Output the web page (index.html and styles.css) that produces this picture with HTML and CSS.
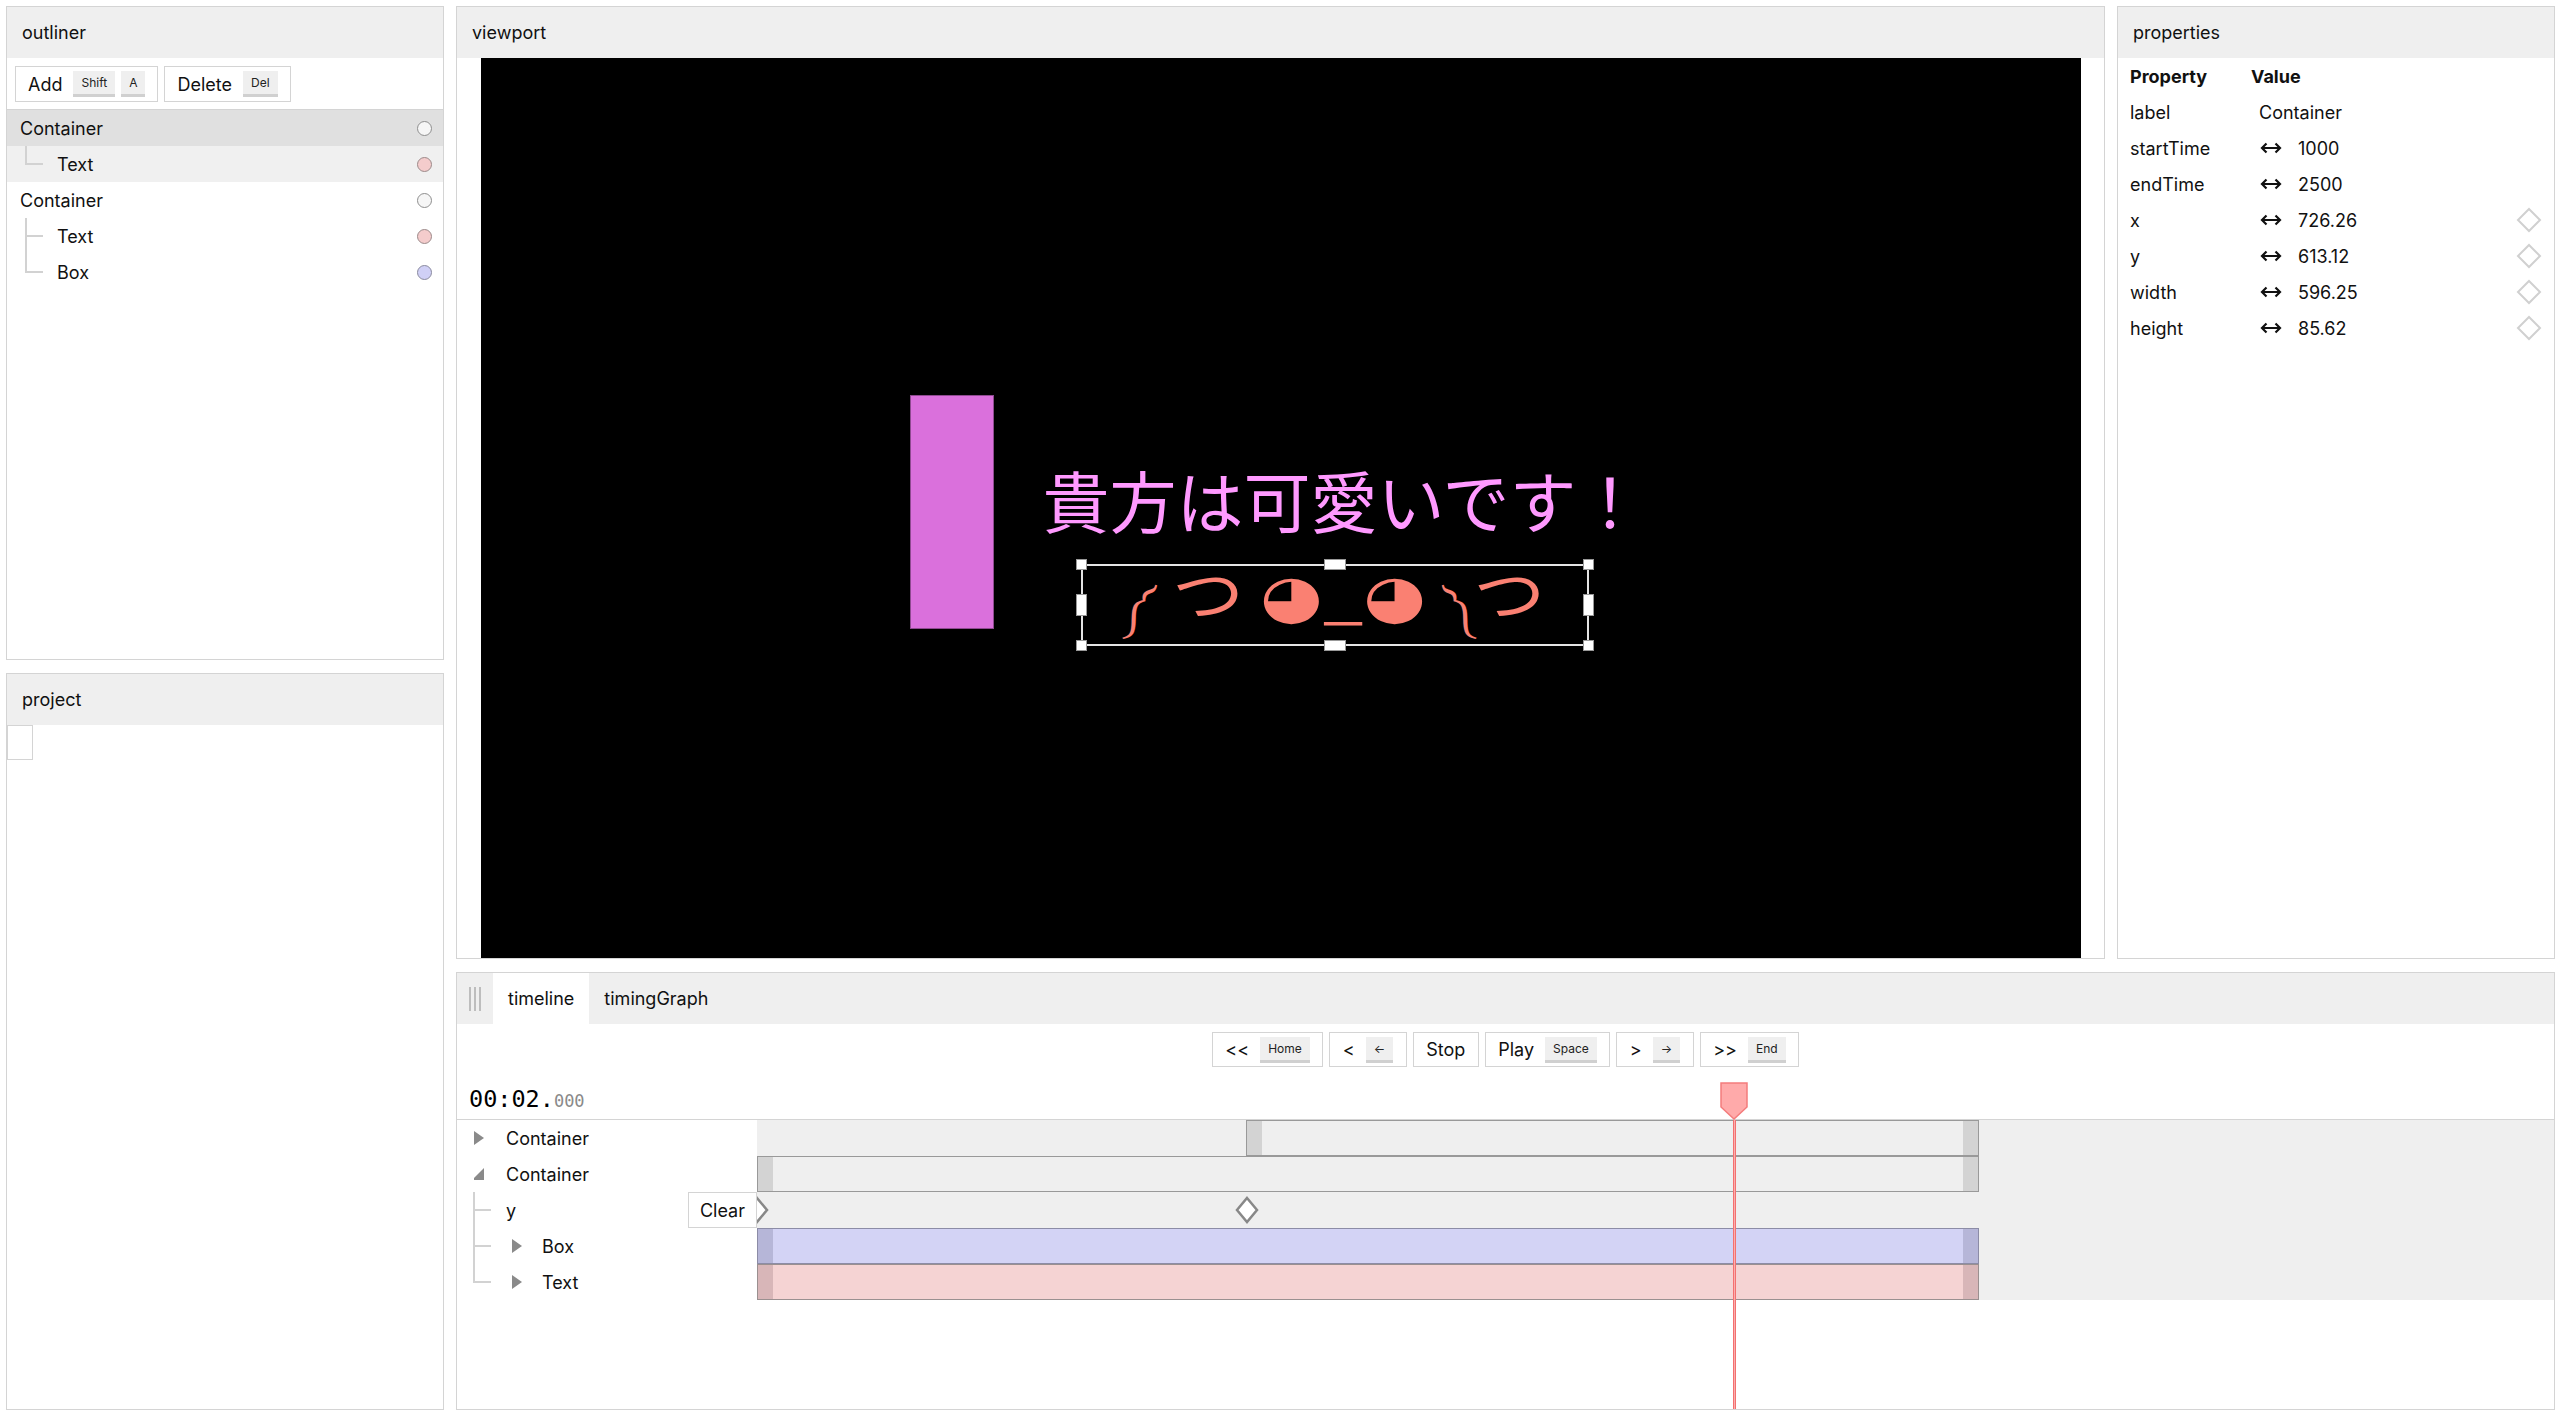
FILE: index.html
```html
<!DOCTYPE html>
<html>
<head>
<meta charset="utf-8">
<link rel="stylesheet" href="styles.css">
</head>
<body>
<div class="app">
  <div class="col-left">
    <section class="panel outliner">
      <header class="panel-head">outliner</header>
      <div class="toolbar">
        <button class="btn"><span class="btn-label">Add</span><kbd>Shift</kbd><kbd>A</kbd></button>
        <button class="btn"><span class="btn-label">Delete</span><kbd>Del</kbd></button>
      </div>
      <ul class="tree">
        <li class="tree-row sel"><span class="lbl">Container</span><span class="dot dot-grey"></span></li>
        <li class="tree-row hover child last"><span class="lbl">Text</span><span class="dot dot-pink"></span></li>
        <li class="tree-row"><span class="lbl">Container</span><span class="dot dot-grey"></span></li>
        <li class="tree-row child"><span class="lbl">Text</span><span class="dot dot-pink"></span></li>
        <li class="tree-row child last"><span class="lbl">Box</span><span class="dot dot-blue"></span></li>
      </ul>
    </section>
    <section class="panel project">
      <header class="panel-head">project</header>
      <div class="project-body"><div class="project-item"></div></div>
    </section>
  </div>

  <div class="col-main">
    <div class="row-top">
      <section class="panel viewport">
        <header class="panel-head">viewport</header>
        <div class="vp-body">
          <div class="canvas">
            <div class="box-shape"></div>
            <div class="jp-text">貴方は可愛いです！</div>
            <div class="kaomoji"><span class="tb">༼</span> つ ◕_◕ <span class="tb">༽</span>つ</div>
            <div class="selection">
              <span class="h h-tl"></span><span class="h h-tm"></span><span class="h h-tr"></span>
              <span class="h h-ml"></span><span class="h h-mr"></span>
              <span class="h h-bl"></span><span class="h h-bm"></span><span class="h h-br"></span>
            </div>
          </div>
        </div>
      </section>

      <section class="panel properties">
        <header class="panel-head">properties</header>
        <div class="prop-table">
          <div class="prop-row prop-head"><span>Property</span><span class="val-head">Value</span><span></span></div>
          <div class="prop-row"><span>label</span><span class="val">Container</span><span></span></div>
          <div class="prop-row"><span>startTime</span><span class="val"><svg class="arr" width="22" height="14" viewBox="0 0 22 14"><path d="M2 7 H20 M6.5 2.5 L2 7 L6.5 11.5 M15.5 2.5 L20 7 L15.5 11.5" fill="none" stroke="#111" stroke-width="2.2"/></svg>1000</span><span></span></div>
          <div class="prop-row"><span>endTime</span><span class="val"><svg class="arr" width="22" height="14" viewBox="0 0 22 14"><path d="M2 7 H20 M6.5 2.5 L2 7 L6.5 11.5 M15.5 2.5 L20 7 L15.5 11.5" fill="none" stroke="#111" stroke-width="2.2"/></svg>2500</span><span></span></div>
          <div class="prop-row"><span>x</span><span class="val"><svg class="arr" width="22" height="14" viewBox="0 0 22 14"><path d="M2 7 H20 M6.5 2.5 L2 7 L6.5 11.5 M15.5 2.5 L20 7 L15.5 11.5" fill="none" stroke="#111" stroke-width="2.2"/></svg>726.26</span><span class="kf"><svg width="26" height="26" viewBox="0 0 26 26"><path d="M13 2 L24 13 L13 24 L2 13 Z" fill="none" stroke="#d0d0d0" stroke-width="2"/></svg></span></div>
          <div class="prop-row"><span>y</span><span class="val"><svg class="arr" width="22" height="14" viewBox="0 0 22 14"><path d="M2 7 H20 M6.5 2.5 L2 7 L6.5 11.5 M15.5 2.5 L20 7 L15.5 11.5" fill="none" stroke="#111" stroke-width="2.2"/></svg>613.12</span><span class="kf"><svg width="26" height="26" viewBox="0 0 26 26"><path d="M13 2 L24 13 L13 24 L2 13 Z" fill="none" stroke="#d0d0d0" stroke-width="2"/></svg></span></div>
          <div class="prop-row"><span>width</span><span class="val"><svg class="arr" width="22" height="14" viewBox="0 0 22 14"><path d="M2 7 H20 M6.5 2.5 L2 7 L6.5 11.5 M15.5 2.5 L20 7 L15.5 11.5" fill="none" stroke="#111" stroke-width="2.2"/></svg>596.25</span><span class="kf"><svg width="26" height="26" viewBox="0 0 26 26"><path d="M13 2 L24 13 L13 24 L2 13 Z" fill="none" stroke="#d0d0d0" stroke-width="2"/></svg></span></div>
          <div class="prop-row"><span>height</span><span class="val"><svg class="arr" width="22" height="14" viewBox="0 0 22 14"><path d="M2 7 H20 M6.5 2.5 L2 7 L6.5 11.5 M15.5 2.5 L20 7 L15.5 11.5" fill="none" stroke="#111" stroke-width="2.2"/></svg>85.62</span><span class="kf"><svg width="26" height="26" viewBox="0 0 26 26"><path d="M13 2 L24 13 L13 24 L2 13 Z" fill="none" stroke="#d0d0d0" stroke-width="2"/></svg></span></div>
        </div>
      </section>
    </div>

    <section class="panel timeline">
      <div class="tabs">
        <div class="grip"><i></i><i></i><i></i></div>
        <div class="tab active">timeline</div>
        <div class="tab">timingGraph</div>
      </div>
      <div class="transport">
        <button class="btn"><span class="btn-label">&lt;&lt;</span><kbd>Home</kbd></button>
        <button class="btn"><span class="btn-label">&lt;</span><kbd>←</kbd></button>
        <button class="btn"><span>Stop</span></button>
        <button class="btn"><span class="btn-label">Play</span><kbd>Space</kbd></button>
        <button class="btn"><span class="btn-label">&gt;</span><kbd>→</kbd></button>
        <button class="btn"><span class="btn-label">&gt;&gt;</span><kbd>End</kbd></button>
      </div>
      <div class="ruler">
        <span class="time">00:02.<span class="ms">000</span></span>
        <svg class="marker" width="28" height="38" viewBox="0 0 28 38"><path d="M1 1 H27 V25 L14 37 L1 25 Z" fill="#ffaaaa" stroke="#f47c7c" stroke-width="1.5"/></svg>
      </div>
      <div class="tracks">
        <div class="trow">
          <div class="tlabel l0"><svg class="tri" width="10" height="14" viewBox="0 0 10 14"><path d="M0 0 L10 7 L0 14 Z" fill="#8a8a8a"/></svg>Container</div>
          <div class="track"><div class="bar bar-grey" style="left:489px;width:733px"></div></div>
        </div>
        <div class="trow">
          <div class="tlabel l0"><svg class="tri" width="10" height="14" viewBox="0 0 10 14"><path d="M10 1 L10 13 L-2 13 Z" fill="#8a8a8a"/></svg>Container</div>
          <div class="track"><div class="bar bar-grey" style="left:0px;width:1222px"></div></div>
        </div>
        <div class="trow">
          <div class="tlabel l1 guide">y<button class="clear">Clear</button></div>
          <div class="track">
            <svg class="key" style="left:-12px" width="24" height="28" viewBox="0 0 24 28"><path d="M12 2 L22 14 L12 26 L2 14 Z" fill="#fff" stroke="#888" stroke-width="2.5"/></svg>
            <svg class="key" style="left:478px" width="24" height="28" viewBox="0 0 24 28"><path d="M12 2 L22 14 L12 26 L2 14 Z" fill="#fff" stroke="#888" stroke-width="2.5"/></svg>
          </div>
        </div>
        <div class="trow">
          <div class="tlabel l2 guide"><svg class="tri" width="10" height="14" viewBox="0 0 10 14"><path d="M0 0 L10 7 L0 14 Z" fill="#8a8a8a"/></svg>Box</div>
          <div class="track"><div class="bar bar-blue" style="left:0px;width:1222px"></div></div>
        </div>
        <div class="trow">
          <div class="tlabel l2 guide last"><svg class="tri" width="10" height="14" viewBox="0 0 10 14"><path d="M0 0 L10 7 L0 14 Z" fill="#8a8a8a"/></svg>Text</div>
          <div class="track"><div class="bar bar-pink" style="left:0px;width:1222px"></div></div>
        </div>
      </div>
      <div class="playhead-line"></div>
    </section>
  </div>
</div>
</body>
</html>
```

FILE: styles.css
```css
* { box-sizing: border-box; }
html, body { margin: 0; padding: 0; }
body {
  font-family: Inter, "Noto Sans", "Noto Sans CJK JP", sans-serif;
  font-size: 18px;
  color: #111;
  background: #fff;
  overflow: hidden;
}
.app {
  display: flex;
  gap: 12px;
  padding: 6px;
  height: 1416px;
  width: 2561px;
}
.col-left {
  width: 438px;
  flex: none;
  display: flex;
  flex-direction: column;
  gap: 13px;
}
.col-main {
  flex: 1;
  min-width: 0;
  display: flex;
  flex-direction: column;
  gap: 13px;
}
.row-top { height: 953px; display: flex; gap: 12px; flex: none; }
.panel {
  border: 1px solid #d4d4d4;
  background: #fff;
  display: flex;
  flex-direction: column;
  overflow: hidden;
  position: relative;
}
.panel-head {
  flex: none;
  height: 51px;
  background: #efefef;
  padding-left: 15px;
  display: flex;
  align-items: center;
}
.outliner { height: 654px; flex: none; }
.project { flex: 1; }
.viewport { flex: 1; min-width: 0; }
.properties { width: 438px; flex: none; }
.timeline { flex: 1; }

/* buttons / kbd */
.btn {
  font: inherit;
  color: #111;
  height: 36px;
  border: 1px solid #d4d4d4;
  background: #fff;
  display: inline-flex;
  align-items: center;
  padding: 0 12px;
  gap: 6px;
  flex: none;
}
.btn-label { margin-right: 5px; }
kbd {
  font-family: Inter, sans-serif;
  font-size: 12px;
  height: 26px;
  padding: 0 8px;
  background: #efefef;
  border-bottom: 3px solid #d0d0d0;
  display: inline-flex;
  align-items: center;
  color: #222;
}

/* outliner */
.toolbar {
  height: 52px;
  flex: none;
  border-bottom: 1px solid #d4d4d4;
  padding: 8px 8px 0;
  display: flex;
  gap: 6px;
  align-items: flex-start;
}
.tree { list-style: none; margin: 0; padding: 0; }
.tree-row {
  height: 36px;
  display: flex;
  align-items: center;
  padding: 1px 11px 0 13px;
  position: relative;
}
.tree-row.sel { background: #e0e0e0; }
.tree-row.hover { background: #f0f0f0; }
.tree-row .lbl { flex: 1; }
.tree-row.child { padding-left: 50px; }
.tree-row.child::before {
  content: "";
  position: absolute;
  left: 18px;
  top: 0;
  width: 2px;
  height: 100%;
  background: #d2d2d2;
}
.tree-row.child.last::before { height: 50%; }
.tree-row.child::after {
  content: "";
  position: absolute;
  left: 18px;
  top: calc(50% - 1px);
  width: 18px;
  height: 2px;
  background: #d2d2d2;
}
.dot {
  width: 15px;
  height: 15px;
  border-radius: 50%;
  border: 1.5px solid #8e8e8e;
  flex: none;
}
.dot-grey { background: #f6f6f6; }
.dot-pink { background: #f4cccc; border-color: #9c8a8a; }
.dot-blue { background: #d0d0f6; border-color: #8a8a9e; }

.project-body { flex: 1; }
.project-item { width: 26px; height: 35px; border: 1px solid #d4d4d4; }

/* viewport */
.vp-body { flex: 1; display: flex; justify-content: center; align-items: flex-start; }
.canvas {
  width: 1600px;
  height: 900px;
  background: #000;
  position: relative;
  flex: none;
  overflow: hidden;
}
.box-shape {
  position: absolute;
  left: 429px;
  top: 337px;
  width: 84px;
  height: 234px;
  background: #da70dc;
  border: 1px solid #8e4a90;
}
.jp-text {
  position: absolute;
  left: 562px;
  top: 407px;
  font-family: "Noto Sans CJK JP", sans-serif;
  font-size: 67px;
  line-height: 1;
  color: #ff99ff;
  white-space: nowrap;
}
.kaomoji {
  position: absolute;
  left: 640px;
  top: 503px;
  font-family: "Noto Sans CJK JP", "DejaVu Sans", sans-serif;
  font-size: 60px;
  line-height: 1;
  color: #fa8072;
  white-space: nowrap;
  transform: scaleX(1.2);
  transform-origin: 0 0;
}
.kaomoji .tb { font-size: 0.6em; vertical-align: -5px; }
.selection {
  position: absolute;
  left: 600px;
  top: 506px;
  width: 508px;
  height: 82px;
  border: 2px solid #e4e4e4;
}
.h {
  position: absolute;
  background: #fff;
  border: 1px solid #999;
  width: 11px;
  height: 11px;
}
.h-tl { left: -7px; top: -7px; }
.h-tr { right: -7px; top: -7px; }
.h-bl { left: -7px; bottom: -7px; }
.h-br { right: -7px; bottom: -7px; }
.h-tm { left: calc(50% - 11px); top: -7px; width: 22px; }
.h-bm { left: calc(50% - 11px); bottom: -7px; width: 22px; }
.h-ml { left: -7px; top: calc(50% - 11px); height: 22px; }
.h-mr { right: -7px; top: calc(50% - 11px); height: 22px; }

/* properties */
.prop-table { display: flex; flex-direction: column; }
.prop-row {
  height: 36px;
  display: grid;
  grid-template-columns: 121px 1fr 38px;
  align-items: center;
  padding-left: 12px;
}
.prop-head { font-weight: 700; }
.val { padding-left: 8px; display: flex; align-items: center; }
.arr { flex: none; margin-left: 1px; margin-right: 16px; }
.kf { display: flex; align-items: center; }

/* timeline */
.tabs {
  height: 51px;
  flex: none;
  background: #efefef;
  display: flex;
}
.grip {
  width: 36px;
  display: flex;
  justify-content: center;
  align-items: center;
  gap: 3px;
}
.grip i { display: block; width: 2px; height: 24px; background: #bdbdbd; }
.tab { padding: 0 15px; display: flex; align-items: center; }
.tab.active { background: #fff; }
.transport {
  margin-top: 8px;
  height: 35px;
  display: flex;
  justify-content: center;
  gap: 6px;
  flex: none;
}
.transport .btn { height: 35px; padding: 0 12.5px; }
.ruler {
  height: 52px;
  flex: none;
  position: relative;
  display: flex;
  align-items: flex-end;
  padding: 0 0 8px 12px;
}
.time {
  font-family: "DejaVu Sans Mono", monospace;
  font-size: 23.5px;
  line-height: 1;
  color: #000;
}
.ms { font-size: 17px; color: #8a8a8a; }
.marker { position: absolute; left: 1263px; top: 15px; }
.tracks { border-top: 1px solid #d4d4d4; flex: none; }
.trow { height: 36px; display: grid; grid-template-columns: 300px 1fr; }
.tlabel {
  position: relative;
  display: flex;
  align-items: center;
}
.tlabel.l0 { padding-left: 17px; }
.tlabel.l0 .tri { margin-right: 22px; }
.tlabel.l1 { padding-left: 49px; }
.tlabel.l2 { padding-left: 55px; }
.tlabel.l2 .tri { margin-right: 20px; }
.tlabel.guide::before {
  content: "";
  position: absolute;
  left: 16px;
  top: 0;
  width: 2px;
  height: 100%;
  background: #d2d2d2;
}
.tlabel.guide.last::before { height: 50%; }
.tlabel.guide::after {
  content: "";
  position: absolute;
  left: 16px;
  top: calc(50% - 1px);
  width: 18px;
  height: 2px;
  background: #d2d2d2;
}
.clear {
  position: absolute;
  right: 0;
  top: 0;
  height: 36px;
  font: inherit;
  color: #111;
  background: #fff;
  border: 1px solid #d4d4d4;
  padding: 0 11px;
  z-index: 2;
}
.track { position: relative; background: #efefef; overflow: hidden; }
.bar {
  position: absolute;
  top: 0;
  height: 36px;
  border: 1px solid #999;
}
.bar::before, .bar::after {
  content: "";
  position: absolute;
  top: 0;
  bottom: 0;
  width: 15px;
}
.bar::before { left: 0; }
.bar::after { right: 0; }
.bar-grey { background: #efefef; }
.bar-grey::before, .bar-grey::after { background: #d3d3d3; }
.bar-blue { background: #d3d3f5; border-color: #8c8ca6; }
.bar-blue::before, .bar-blue::after { background: #b6b6d8; }
.bar-pink { background: #f5d3d3; border-color: #9a9090; }
.bar-pink::before, .bar-pink::after { background: #d8b6b8; }
.key { position: absolute; top: 4px; }
.playhead-line {
  position: absolute;
  left: 1276px;
  top: 147px;
  bottom: 0;
  width: 3px;
  background: #f9b0b0;
  border-left: 1px solid #f47070;
  border-right: 1px solid #f47070;
  z-index: 3;
}
```
